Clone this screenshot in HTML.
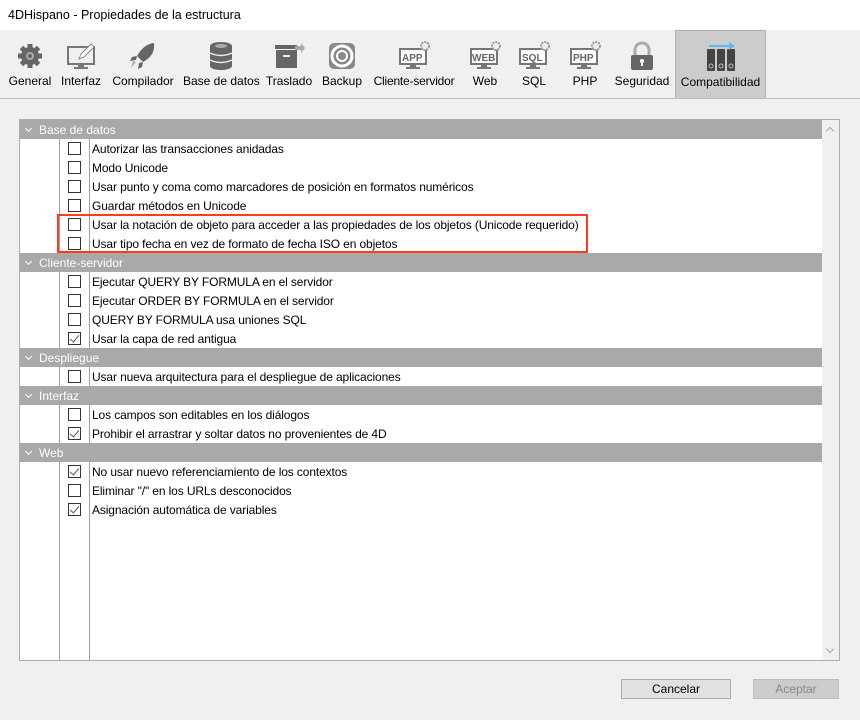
<!DOCTYPE html><html><head><style>
body{margin:0;width:860px;height:720px;background:#f0f0f0;font-family:"Liberation Sans",sans-serif;font-size:12px;color:#000;position:relative;overflow:hidden}
.title{position:absolute;left:0;top:0;width:860px;height:30px;background:#fff;font-size:12.5px;line-height:30px;padding-left:8px;box-sizing:border-box}
.tb{position:absolute;top:30px;left:0;width:860px;height:68px;border-bottom:1px solid #bdbdbd}
.tab{position:absolute;top:0;height:68px;text-align:center;font-size:12px}
.tab span{position:absolute;top:44px;left:0;right:0;white-space:nowrap}
.tab svg{position:absolute;top:10px;left:50%;margin-left:-16px}
.sel{background:#ccc;border:1px solid #b0b0b0;border-bottom:none;box-sizing:border-box}
.list{position:absolute;left:19px;top:119px;width:821px;height:542px;background:#fff;border:1px solid #adadad;box-sizing:border-box;overflow:hidden}
.vl{position:absolute;top:0;bottom:0;width:1px;background:#a0a0a0}
.sb{position:absolute;right:0;top:0;width:17px;height:540px;background:#f0f0f0}
.hdr{position:absolute;left:0;width:803px;height:19px;background:#a9a9a9;color:#fff;line-height:20px;padding-left:19px;box-sizing:border-box}
.hdr:before{content:"";position:absolute;left:6px;top:6px;width:4px;height:4px;border-right:1.5px solid #fff;border-bottom:1.5px solid #fff;transform:rotate(45deg)}
.row{position:absolute;left:0;width:803px;height:19px;line-height:20px}
.row .cb{position:absolute;left:48px;top:3px;width:11px;height:11px;border:1px solid #333;background:#fff}
.row .t{position:absolute;left:72px;white-space:nowrap;letter-spacing:-0.12px}
.ck:after{content:"";position:absolute;left:3px;top:0px;width:4px;height:8px;border-right:1.3px solid #555;border-bottom:1.3px solid #555;transform:rotate(40deg)}
.btn{position:absolute;top:679px;height:20px;border:1px solid #adadad;box-sizing:border-box;text-align:center;line-height:18px;background:#e1e1e1}
</style></head><body>
<div class="title">4DHispano - Propiedades de la estructura</div>
<div class="tb">
<div class="tab" style="left:6px;width:48px"><svg width="32" height="32"><g fill="#666"><circle cx="16" cy="16" r="9"/><g stroke="#666" stroke-width="5"><line x1="16" y1="4" x2="16" y2="28"/><line x1="4" y1="16" x2="28" y2="16"/><line x1="7.5" y1="7.5" x2="24.5" y2="24.5"/><line x1="24.5" y1="7.5" x2="7.5" y2="24.5"/></g></g><circle cx="16" cy="16" r="4" fill="#aaa"/><circle cx="16" cy="16" r="2" fill="#666"/></svg><span>General</span></div>
<div class="tab" style="left:58px;width:46px"><svg width="32" height="32"><rect x="3" y="7" width="26" height="17" fill="none" stroke="#777" stroke-width="2"/><rect x="13" y="24" width="6" height="3" fill="#777"/><rect x="9" y="27" width="14" height="2" fill="#777"/><path d="M14 19l2-5 10-10 3 3-10 10z" fill="#fff" stroke="#888"/></svg><span>Interfaz</span></div>
<div class="tab" style="left:110px;width:66px"><svg width="32" height="32"><path d="M27 3c-8 1-13 6-17 13l6 6c7-4 12-9 11-19z" fill="#666"/><path d="M10 16l-5 1-2 4 6-1zM16 22l-1 5-4 2 1-6z" fill="#666"/><path d="M9 22l-5 6 2-7z" fill="#aaa"/></svg><span>Compilador</span></div>
<div class="tab" style="left:183px;width:76px"><svg width="32" height="32"><ellipse cx="16" cy="6" rx="11" ry="4" fill="#666"/><rect x="5" y="6" width="22" height="20" fill="#666"/><ellipse cx="16" cy="26" rx="11" ry="4" fill="#666"/><path d="M5 13q11 5 22 0M5 20q11 5 22 0" stroke="#eee" stroke-width="1.5" fill="none"/><ellipse cx="16" cy="6" rx="6" ry="2" fill="#aaa"/></svg><span>Base de datos</span></div>
<div class="tab" style="left:265px;width:48px"><svg width="32" height="32"><rect x="2" y="5" width="22" height="4" fill="#666"/><rect x="3" y="10" width="21" height="18" fill="#666"/><rect x="10" y="15" width="7" height="2" fill="#eee"/><path d="M22 6h6v-3l4 5-4 5v-3h-6z" fill="#aaa"/></svg><span>Traslado</span></div>
<div class="tab" style="left:320px;width:44px"><svg width="32" height="32"><rect x="3" y="3" width="26" height="26" rx="5" fill="#888"/><circle cx="16" cy="16" r="10" fill="none" stroke="#fff" stroke-width="3"/><circle cx="16" cy="16" r="5" fill="#888" stroke="#fff" stroke-width="2"/></svg><span>Backup</span></div>
<div class="tab" style="left:372px;width:84px"><svg width="32" height="32"><rect x="2" y="9" width="26" height="15" fill="#fff" stroke="#777" stroke-width="2"/><text x="4" y="21" font-size="10" font-weight="bold" fill="#666" font-family="Liberation Sans">APP</text><rect x="12" y="24" width="6" height="3" fill="#777"/><rect x="8" y="27" width="14" height="2" fill="#777"/><circle cx="27" cy="6" r="4" fill="#eee" stroke="#999" stroke-width="2" stroke-dasharray="2 1"/></svg><span style="letter-spacing:-0.2px">Cliente-servidor</span></div>
<div class="tab" style="left:466px;width:38px"><svg width="32" height="32"><rect x="2" y="9" width="26" height="15" fill="#fff" stroke="#777" stroke-width="2"/><text x="3" y="21" font-size="10" font-weight="bold" fill="#666" font-family="Liberation Sans">WEB</text><rect x="12" y="24" width="6" height="3" fill="#777"/><rect x="8" y="27" width="14" height="2" fill="#777"/><circle cx="27" cy="6" r="4" fill="#eee" stroke="#999" stroke-width="2" stroke-dasharray="2 1"/></svg><span>Web</span></div>
<div class="tab" style="left:515px;width:38px"><svg width="32" height="32"><rect x="2" y="9" width="26" height="15" fill="#fff" stroke="#777" stroke-width="2"/><text x="4" y="21" font-size="10" font-weight="bold" fill="#666" font-family="Liberation Sans">SQL</text><rect x="12" y="24" width="6" height="3" fill="#777"/><rect x="8" y="27" width="14" height="2" fill="#777"/><circle cx="27" cy="6" r="4" fill="#eee" stroke="#999" stroke-width="2" stroke-dasharray="2 1"/></svg><span>SQL</span></div>
<div class="tab" style="left:566px;width:38px"><svg width="32" height="32"><rect x="2" y="9" width="26" height="15" fill="#fff" stroke="#777" stroke-width="2"/><text x="4" y="21" font-size="10" font-weight="bold" fill="#666" font-family="Liberation Sans">PHP</text><rect x="12" y="24" width="6" height="3" fill="#777"/><rect x="8" y="27" width="14" height="2" fill="#777"/><circle cx="27" cy="6" r="4" fill="#eee" stroke="#999" stroke-width="2" stroke-dasharray="2 1"/></svg><span>PHP</span></div>
<div class="tab" style="left:612px;width:60px"><svg width="32" height="32"><path d="M9 15v-5a7 7 0 0114 0v5" fill="none" stroke="#aaa" stroke-width="3"/><rect x="5" y="15" width="22" height="15" rx="2" fill="#666"/><circle cx="16" cy="21" r="2" fill="#fff"/><rect x="15" y="21" width="2" height="5" fill="#fff"/></svg><span>Seguridad</span></div>
<div class="tab sel" style="left:675px;width:91px"><svg width="32" height="32"><g fill="#444"><rect x="2" y="8" width="8" height="22" rx="1"/><rect x="12" y="8" width="8" height="22" rx="1"/><rect x="22" y="8" width="8" height="22" rx="1"/></g><g fill="none" stroke="#bbb"><circle cx="6" cy="25" r="2"/><circle cx="16" cy="25" r="2"/><circle cx="26" cy="25" r="2"/></g><path d="M4 4h20v-3l6 4-6 4v-3h-20z" fill="#5bbcf0"/></svg><span>Compatibilidad</span></div>
</div>
<div class="list">
<div class="vl" style="left:39px"></div><div class="vl" style="left:69px"></div>
<div class="hdr" style="top:0">Base de datos</div>
<div class="row" style="top:19px"><i class="cb"></i><span class="t">Autorizar las transacciones anidadas</span></div>
<div class="row" style="top:38px"><i class="cb"></i><span class="t">Modo Unicode</span></div>
<div class="row" style="top:57px"><i class="cb"></i><span class="t">Usar punto y coma como marcadores de posición en formatos numéricos</span></div>
<div class="row" style="top:76px"><i class="cb"></i><span class="t">Guardar métodos en Unicode</span></div>
<div class="row" style="top:95px"><i class="cb"></i><span class="t">Usar la notación de objeto para acceder a las propiedades de los objetos (Unicode requerido)</span></div>
<div class="row" style="top:114px"><i class="cb"></i><span class="t">Usar tipo fecha en vez de formato de fecha ISO en objetos</span></div>
<div class="hdr" style="top:133px">Cliente-servidor</div>
<div class="row" style="top:152px"><i class="cb"></i><span class="t">Ejecutar QUERY BY FORMULA en el servidor</span></div>
<div class="row" style="top:171px"><i class="cb"></i><span class="t">Ejecutar ORDER BY FORMULA en el servidor</span></div>
<div class="row" style="top:190px"><i class="cb"></i><span class="t">QUERY BY FORMULA usa uniones SQL</span></div>
<div class="row" style="top:209px"><i class="cb ck"></i><span class="t">Usar la capa de red antigua</span></div>
<div class="hdr" style="top:228px">Despliegue</div>
<div class="row" style="top:247px"><i class="cb"></i><span class="t">Usar nueva arquitectura para el despliegue de aplicaciones</span></div>
<div class="hdr" style="top:266px">Interfaz</div>
<div class="row" style="top:285px"><i class="cb"></i><span class="t">Los campos son editables en los diálogos</span></div>
<div class="row" style="top:304px"><i class="cb ck"></i><span class="t">Prohibir el arrastrar y soltar datos no provenientes de 4D</span></div>
<div class="hdr" style="top:323px">Web</div>
<div class="row" style="top:342px"><i class="cb ck"></i><span class="t">No usar nuevo referenciamiento de los contextos</span></div>
<div class="row" style="top:361px"><i class="cb"></i><span class="t">Eliminar "/" en los URLs desconocidos</span></div>
<div class="row" style="top:380px"><i class="cb ck"></i><span class="t">Asignación automática de variables</span></div>
<div class="sb"><div style="position:absolute;left:5px;top:8px;width:5px;height:5px;border-left:1px solid #aaa;border-top:1px solid #aaa;transform:rotate(45deg)"></div><div style="position:absolute;left:5px;bottom:8px;width:5px;height:5px;border-right:1px solid #aaa;border-bottom:1px solid #aaa;transform:rotate(45deg)"></div></div>
</div>
<div style="position:absolute;left:57px;top:214px;width:531px;height:39px;border:2px solid #ff3b1f;box-sizing:border-box"></div>
<div class="btn" style="left:621px;width:110px">Cancelar</div>
<div class="btn" style="left:753px;width:86px;background:#ccc;border-color:#bfbfbf;color:#888">Aceptar</div>
</body></html>
